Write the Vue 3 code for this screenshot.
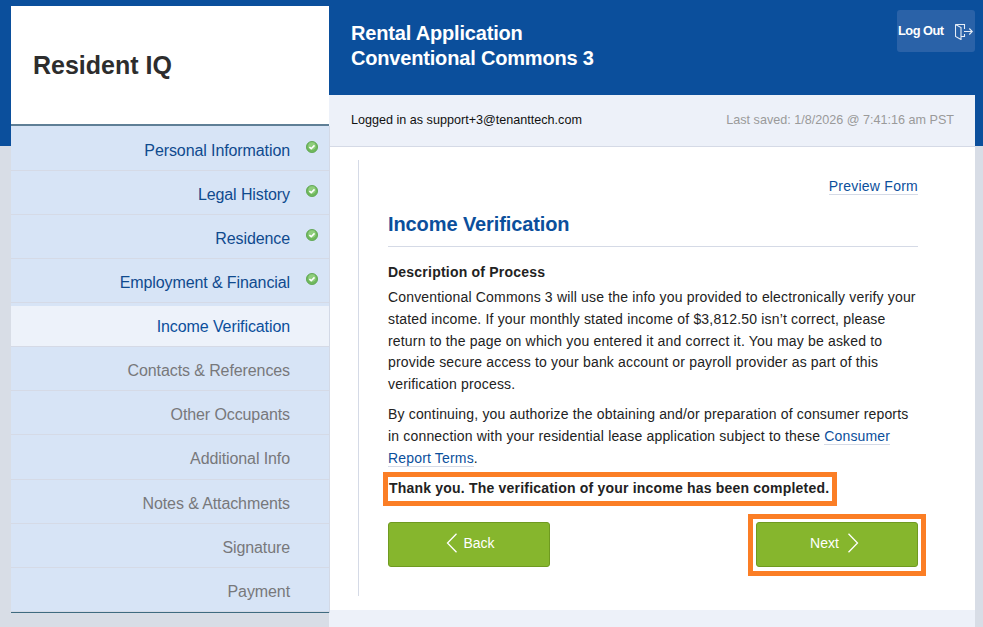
<template>
  <div class="page">
    <div class="shell">
      <aside class="side">
        <div class="logo">Resident IQ</div>
        <nav class="steps">
          <div
            v-for="step in steps"
            :key="step.name"
            class="step"
            :class="{ current: step.state === 'current', todo: step.state === 'todo' }"
          >
            <span class="step-name">{{ step.name }}</span>
            <span class="step-mark">
              <svg v-if="step.state === 'done'" width="12" height="12" viewBox="0 0 12 12">
                <circle cx="6" cy="6" r="5.6" fill="#6fb85c" stroke="#5aa34c" stroke-width="0.8" />
                <circle cx="6" cy="5" r="3.8" fill="#8fcd7d" />
                <path d="M3.4 6 5.2 7.7 8.5 4.4" fill="none" stroke="#fff" stroke-width="1.6" />
              </svg>
            </span>
          </div>
        </nav>
      </aside>

      <main class="main">
        <header class="head">
          <h1 class="title">Rental Application<br />Conventional Commons 3</h1>
          <button class="logout">
            <span>Log Out</span>
            <svg class="door" width="18" height="16" viewBox="0 0 18 16" fill="none" stroke="#e6edf6" stroke-width="1.1">
              <path d="M.5.5h9V5M9.500 10v2.500H6" />
              <path d="M.5.5v12l5.500 3V3.500L.5.5" />
              <path d="M9 7.500h8.300M14.300 4.500l3 3-3 3" />
            </svg>
          </button>
        </header>

        <div class="status">
          <span class="user">Logged in as support+3@tenanttech.com</span>
          <span class="saved">Last saved: 1/8/2026 @ 7:41:16 am PST</span>
        </div>

        <section class="content">
          <div class="form">
            <div class="preview"><a class="link">Preview Form</a></div>
            <h2 class="heading">Income Verification</h2>
            <h3 class="sub">Description of Process</h3>
            <p class="para">
              Conventional Commons 3 will use the info you provided to electronically verify your
              stated income. If your monthly stated income of $3,812.50 isn’t correct, please
              return to the page on which you entered it and correct it. You may be asked to
              provide secure access to your bank account or payroll provider as part of this
              verification process.
            </p>
            <p class="para second">
              By continuing, you authorize the obtaining and/or preparation of consumer reports
              in connection with your residential lease application subject to these
              <a class="link">Consumer Report Terms</a>.
            </p>
            <div class="thanks">Thank you. The verification of your income has been completed.</div>
            <div class="actions">
              <button class="btn back">
                <svg width="12" height="20" viewBox="0 0 12 20" fill="none" stroke="#fff" stroke-width="1.3">
                  <path d="M10.500 .8 1.500 10l9 9.200" />
                </svg>
                <span>Back</span>
              </button>
              <div class="next-box">
                <button class="btn next">
                  <span>Next</span>
                  <svg width="12" height="20" viewBox="0 0 12 20" fill="none" stroke="#fff" stroke-width="1.3">
                    <path d="M1.500 .8l9 9.200-9 9.200" />
                  </svg>
                </button>
              </div>
            </div>
          </div>
        </section>
        <div class="foot"></div>
      </main>
    </div>
  </div>
</template>

<script setup>
const steps = [
  { name: 'Personal Information', state: 'done' },
  { name: 'Legal History', state: 'done' },
  { name: 'Residence', state: 'done' },
  { name: 'Employment & Financial', state: 'done' },
  { name: 'Income Verification', state: 'current' },
  { name: 'Contacts & References', state: 'todo' },
  { name: 'Other Occupants', state: 'todo' },
  { name: 'Additional Info', state: 'todo' },
  { name: 'Notes & Attachments', state: 'todo' },
  { name: 'Signature', state: 'todo' },
  { name: 'Payment', state: 'todo' }
];
</script>

<style>
html, body { margin: 0; padding: 0; overflow: hidden; }
</style>

<style scoped>
* { box-sizing: border-box; }
.page {
  height: 627px;
  overflow: hidden;
  padding: 0 8px 0 11px;
  background: linear-gradient(#0b4f9c 146px, #d8dde6 146px);
  font-family: "Liberation Sans", Arial, sans-serif;
  color: #222;
}
.shell { display: flex; height: 627px; }
.side { width: 318px; flex: none; padding-top: 6px; }
.logo {
  height: 120px;
  padding: 44px 0 0 22px;
  background: #fff;
  border-bottom: 2px solid #5f7f96;
  color: #2d2d2d;
  font-size: 25px;
  font-weight: 700;
  line-height: 30px;
}
.steps {
  position: relative;
  padding-top: 0.75px;
  background: #d7e4f6;
  border-bottom: 1px solid #3f6b80;
  box-shadow: 1px 0 0 #d3d9e6;
}
.step {
  display: flex;
  height: 44.1px;
  align-items: center;
  justify-content: flex-end;
  border-bottom: 1px solid #d5dae6;
  font-size: 16px;
  letter-spacing: -0.1px;
  color: #0f4a8e;
}
.step-name { margin-top: 5px; }
.step-mark { display: flex; width: 39px; height: 100%; padding: 14.250px 0 0 16px; }
.current { background: #edf2fa; color: #0b4f9c; box-shadow: inset 0 3px 0 #d7e4f6; }
.todo { color: #77787b; }
.main { flex: 1; min-width: 0; }
.head { display: flex; justify-content: space-between; height: 95px; padding: 10px 0 0 22px; color: #fff; }
.title { margin: 11px 0 0; font-size: 20px; font-weight: 700; line-height: 25px; letter-spacing: -0.18px; }
.logout {
  display: flex;
  width: 78px;
  height: 42px;
  padding: 0 0 2px 1px;
  align-items: center;
  gap: 11px;
  border: 0;
  border-radius: 3px;
  background: #2a62a8;
  color: #fff;
  font: 700 12.8px "Liberation Sans", Arial, sans-serif;
  letter-spacing: -0.5px;
  white-space: nowrap;
}
.door { margin-top: 4px; }
.status {
  display: flex;
  height: 52px;
  padding: 0 21px 2px 22px;
  align-items: center;
  justify-content: space-between;
  background: #edf1f9;
  border-bottom: 1px solid #d5dae6;
  font-size: 12.6px;
}
.user { color: #111; }
.saved { color: #9a9a9a; }
.content { height: 463px; padding: 13px 0 14px 29px; background: #fff; }
.form { height: 100%; padding: 17px 57px 0 29px; border-left: 1px solid #d5dae6; }
.preview { text-align: right; font-size: 14px; line-height: 18px; letter-spacing: 0.25px; }
.link { color: #0b4f9c; border-bottom: 1px solid #d5dae6; }
.heading {
  margin: 17px 0 0;
  padding-bottom: 10px;
  border-bottom: 1px solid #d5dae6;
  color: #0b4f9c;
  font-size: 20px;
  line-height: 24px;
  letter-spacing: -0.1px;
}
.sub { margin: 16px 0 0; font-size: 14px; line-height: 18px; color: #222; letter-spacing: 0.22px; }
.para { margin: 6px 0 0; font-size: 14px; line-height: 21.8px; color: #222; letter-spacing: 0.17px; }
.second { margin-top: 8px; }
.thanks {
  display: inline-block;
  margin: 3px 0 0 -5px;
  padding: 3px 3px 4px 1px;
  border: 5px solid #fb7e25;
  font-size: 14px;
  font-weight: 700;
  line-height: 17px;
  letter-spacing: 0.2px;
  white-space: nowrap;
}
.actions { display: flex; justify-content: space-between; margin-top: 16px; }
.btn {
  display: flex;
  width: 162px;
  height: 45px;
  padding: 0 0 3px;
  align-items: center;
  justify-content: center;
  gap: 5px;
  border: 1px solid #6f9a20;
  border-radius: 3px;
  background: #86b62d;
  color: #fff;
  font: 14px "Liberation Sans", Arial, sans-serif;
}
.back { padding-left: 3px; }
.next { padding-right: 5px; gap: 8px; }
.next-box { margin: -8px -8px -9px -8px; padding: 3px 3px 4px; border: 5px solid #fb7e25; }
.foot { height: 17px; background: #edf1f9; }
</style>
